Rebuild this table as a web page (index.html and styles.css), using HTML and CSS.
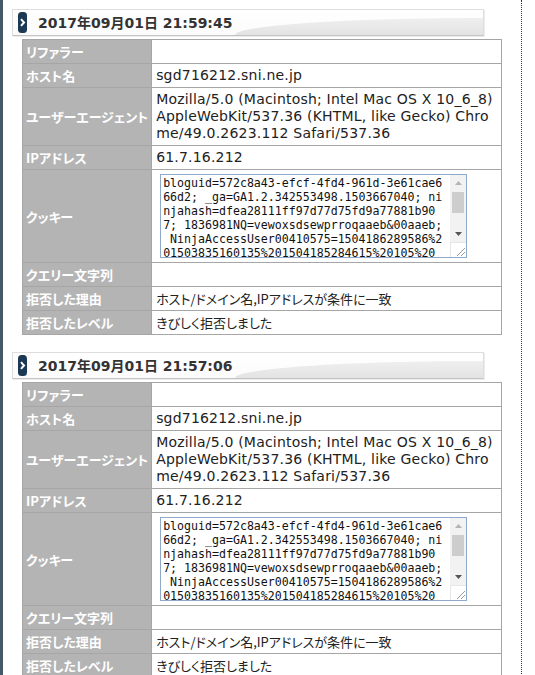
FILE: index.html
```html
<!DOCTYPE html>
<html lang="ja">
<head>
  <meta charset="UTF-8" />
  <meta name="viewport" content="width=device-width, initial-scale=1.0"/>
  <title>アクセス拒否ログ</title>
  <link rel="stylesheet" href="styles.css">
</head>
<body>
  <div class="page">

    <div class="entry">
      <h2 class="entry-head">
        <svg class="mark" width="9" height="21" viewBox="0 0 9 21"><rect width="9" height="21" rx="3.5" fill="#1b3954"/><path d="M3 7.2 L6 10.5 L3 13.8" stroke="#fff" stroke-width="2" fill="none"/></svg>
        2017年09月01日 21:59:45
      </h2>
      <table class="log">
        <tr><th>リファラー</th><td></td></tr>
        <tr><th>ホスト名</th><td>sgd716212.sni.ne.jp</td></tr>
        <tr><th>ユーザーエージェント</th><td class="ua">Mozilla/5.0 (Macintosh; Intel Mac OS X 10_6_8) AppleWebKit/537.36 (KHTML, like Gecko) Chrome/49.0.2623.112 Safari/537.36</td></tr>
        <tr><th>IPアドレス</th><td>61.7.16.212</td></tr>
        <tr><th>クッキー</th><td class="cookie">
          <div class="cookie-box">
            <textarea readonly>bloguid=572c8a43-efcf-4fd4-961d-3e61cae6
66d2; _ga=GA1.2.342553498.1503667040; ni
njahash=dfea28111ff97d77d75fd9a77881b90
7; 1836981NQ=vewoxsdsewprroqaaeb&amp;00aaeb;
 NinjaAccessUser00410575=1504186289586%2
01503835160135%201504185284615%20105%20
1504186289586; ninja_ad=1; __utma=17346
5225.1094877351.1503667040.1504185285.15
04186290.4; __utmz=173465225.1503667040.
1.1.utmcsr=(direct)|utmccn=(direct)</textarea>
            <div class="vscroll">
              <span class="btn"><svg width="7" height="4"><path d="M0 4 L3.5 0 L7 4Z" fill="#b4b4b4"/></svg></span>
              <span class="thumb"></span>
              <span class="track"></span>
              <span class="btn"><svg width="7" height="4"><path d="M0 0 L3.5 4 L7 0Z" fill="#555"/></svg></span>
              <span class="grip"><svg width="9" height="9"><path d="M1 9 L9 1 M5 9 L9 5" stroke="#9a9a9a" stroke-width="1"/></svg></span>
            </div>
          </div>
        </td></tr>
        <tr><th>クエリー文字列</th><td></td></tr>
        <tr><th>拒否した理由</th><td class="ja">ホスト/ドメイン名,IPアドレスが条件に一致</td></tr>
        <tr><th>拒否したレベル</th><td class="ja">きびしく拒否しました</td></tr>
      </table>
    </div>

    <div class="entry">
      <h2 class="entry-head">
        <svg class="mark" width="9" height="21" viewBox="0 0 9 21"><rect width="9" height="21" rx="3.5" fill="#1b3954"/><path d="M3 7.2 L6 10.5 L3 13.8" stroke="#fff" stroke-width="2" fill="none"/></svg>
        2017年09月01日 21:57:06
      </h2>
      <table class="log">
        <tr><th>リファラー</th><td></td></tr>
        <tr><th>ホスト名</th><td>sgd716212.sni.ne.jp</td></tr>
        <tr><th>ユーザーエージェント</th><td class="ua">Mozilla/5.0 (Macintosh; Intel Mac OS X 10_6_8) AppleWebKit/537.36 (KHTML, like Gecko) Chrome/49.0.2623.112 Safari/537.36</td></tr>
        <tr><th>IPアドレス</th><td>61.7.16.212</td></tr>
        <tr><th>クッキー</th><td class="cookie">
          <div class="cookie-box">
            <textarea readonly>bloguid=572c8a43-efcf-4fd4-961d-3e61cae6
66d2; _ga=GA1.2.342553498.1503667040; ni
njahash=dfea28111ff97d77d75fd9a77881b90
7; 1836981NQ=vewoxsdsewprroqaaeb&amp;00aaeb;
 NinjaAccessUser00410575=1504186289586%2
01503835160135%201504185284615%20105%20
1504186289586; ninja_ad=1; __utma=17346
5225.1094877351.1503667040.1504185285.15
04186290.4; __utmz=173465225.1503667040.
1.1.utmcsr=(direct)|utmccn=(direct)</textarea>
            <div class="vscroll">
              <span class="btn"><svg width="7" height="4"><path d="M0 4 L3.5 0 L7 4Z" fill="#b4b4b4"/></svg></span>
              <span class="thumb"></span>
              <span class="track"></span>
              <span class="btn"><svg width="7" height="4"><path d="M0 0 L3.5 4 L7 0Z" fill="#555"/></svg></span>
              <span class="grip"><svg width="9" height="9"><path d="M1 9 L9 1 M5 9 L9 5" stroke="#9a9a9a" stroke-width="1"/></svg></span>
            </div>
          </div>
        </td></tr>
        <tr><th>クエリー文字列</th><td></td></tr>
        <tr><th>拒否した理由</th><td class="ja">ホスト/ドメイン名,IPアドレスが条件に一致</td></tr>
        <tr><th>拒否したレベル</th><td class="ja">きびしく拒否しました</td></tr>
      </table>
    </div>

  </div>
</body>
</html>
```

FILE: styles.css
```css
html, body {
  margin: 0;
  background: #fff;
}

body {
  font-family: "DejaVu Sans", "Noto Sans CJK JP", sans-serif;
  color: #333;
  overflow: hidden;
}

.page {
  box-sizing: border-box;
  width: 522px;
  min-height: 100vh;
  padding: 9px 0 0 9px;
  border-left: 3px solid #45596b;
  border-right: 1px dotted #333;
}

.entry + .entry {
  margin-top: 17px;
}

/* Date bar */
.entry-head {
  position: relative;
  z-index: 0;
  box-sizing: border-box;
  display: flex;
  align-items: center;
  gap: 11px;
  width: 472px;
  height: 27px;
  margin: 0;
  padding-left: 5px;
  border: 1px solid #dedede;
  border-bottom-color: #c4c4c4;
  box-shadow: 1px 1px 0 #ececec;
  background: linear-gradient(#fff, #fbfbfb);
  font-size: 14px;
  font-weight: bold;
  color: #333;
  line-height: 1;
}

/* grey swoosh in the bar's lower right */
.entry-head::before {
  content: '';
  position: absolute;
  z-index: -1;
  right: 0;
  bottom: 0;
  width: 248px;
  height: 17px;
  border-top-left-radius: 248px 17px;
  background: linear-gradient(#efefef, #e3e3e3);
}

.mark {
  flex: none;
}

/* Log table */
.log {
  border-collapse: collapse;
  width: 480px;
  margin: 3px 0 0 10px;
  font-size: 14px;
  line-height: 17px;
}

.log th,
.log td {
  border: 1px solid #a6a6a6;
  vertical-align: middle;
  text-align: left;
}

.log th {
  width: 121px;
  height: 17px;
  padding: 3px 3px;
  background: #b4b4b4;
  color: #fff;
  font-family: "Noto Sans CJK JP", sans-serif;
  font-size: 13px;
  font-weight: bold;
  font-feature-settings: "palt";
  white-space: nowrap;
}

.log td {
  padding: 3px 4px;
  color: #222;
  letter-spacing: 0.2px;
}

.log td.ua {
  word-break: break-all;
}

.log td.ja {
  font-family: "Noto Sans CJK JP", sans-serif;
  font-size: 13px;
  letter-spacing: 0;
  font-feature-settings: "palt";
}

/* Cookie field: text pane + scrollbar */
.cookie-box {
  display: flex;
  box-sizing: border-box;
  width: 307px;
  height: 84px;
  margin: 1px 0 1px 4px;
  border: 1px solid #8ea9c9;
  background: #fff;
}

.cookie-box textarea {
  flex: 1;
  min-width: 0;
  margin: 0;
  padding: 1px 2px;
  border: 0;
  outline: none;
  font-family: "DejaVu Sans Mono", monospace;
  font-size: 11.6px;
  line-height: 14px;
  letter-spacing: 0;
  color: #111;
  resize: none;
  white-space: pre;
  overflow: hidden;
}

.vscroll {
  flex: none;
  display: flex;
  flex-direction: column;
  width: 16px;
  background: #f2f2f2;
}

.vscroll .btn {
  display: flex;
  align-items: center;
  justify-content: center;
  height: 16px;
}

.vscroll .thumb {
  height: 21px;
  margin: 1px 2px 0;
  background: #cdcdcd;
}

.vscroll .track {
  flex: 1;
}

.vscroll .grip {
  display: flex;
  align-items: flex-end;
  justify-content: flex-end;
  height: 15px;
  padding: 0 1px 1px 0;
  box-sizing: border-box;
  background: #fff;
  border-top: 1px solid #e6e6e6;
  border-left: 1px solid #e6e6e6;
}
```
